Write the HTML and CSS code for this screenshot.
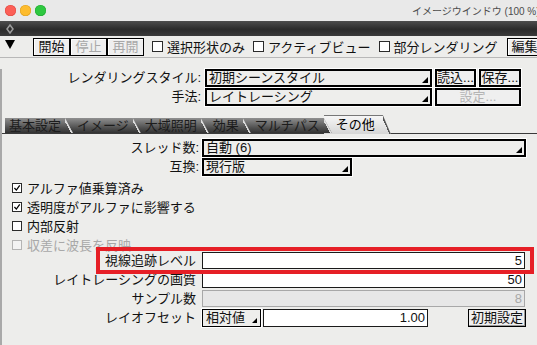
FILE: index.html
```html
<!DOCTYPE html>
<html lang="ja">
<head>
  <meta charset="UTF-8">
  <title>イメージウインドウ</title>
  <link rel="stylesheet" href="styles.css">
</head>
<body>
  <div class="window">
    <div class="titlebar">
      <span class="light red"></span><span class="light yellow"></span><span class="light green"></span>
      <span class="title">イメージウインドウ (100 %)</span>
    </div>
    <div class="darkbar">
      <svg width="8" height="10" viewBox="0 0 8 10"><polygon points="4,1 7,5 4,9 1,5" fill="none" stroke="#9c9c9c" stroke-width="1.5"/></svg>
    </div>

    <div class="toolbar">
      <svg class="disclosure" width="10" height="9" viewBox="0 0 10 9"><polygon points="0,0 10,0 5,9" fill="#000"/></svg>
      <div class="tool-btns">
        <button class="tbtn">開始</button><button class="tbtn" disabled>停止</button><button class="tbtn" disabled>再開</button>
      </div>
      <label class="check"><span class="box"></span>選択形状のみ</label>
      <label class="check"><span class="box"></span>アクティブビュー</label>
      <label class="check"><span class="box"></span>部分レンダリング</label>
      <button class="tbtn edit">編集</button>
    </div>

    <div class="content">
      <div class="style-grid">
        <span class="label">レンダリングスタイル:</span>
        <div class="select">初期シーンスタイル</div>
        <button class="btn">読込...</button>
        <button class="btn">保存...</button>
        <span class="label">手法:</span>
        <div class="select">レイトレーシング</div>
        <button class="btn wide" disabled>設定...</button>
      </div>

      <div class="tabs">
        <span class="tab">基本設定</span>
        <span class="tab">イメージ</span>
        <span class="tab">大域照明</span>
        <span class="tab">効果</span>
        <span class="tab">マルチパス</span>
        <span class="tab active">その他</span>
      </div>

      <div class="opt-grid">
        <span class="label">スレッド数:</span>
        <div class="select threads">自動 (6)</div>
        <span class="label">互換:</span>
        <div class="select compat">現行版</div>
      </div>

      <div class="checks">
        <label class="check"><span class="box"><svg viewBox="0 0 10 10"><path d="M1.8 5 L4.2 7.6 L8.4 1.8" fill="none" stroke="#000" stroke-width="1.6"/></svg></span>アルファ値乗算済み</label>
        <label class="check"><span class="box"><svg viewBox="0 0 10 10"><path d="M1.8 5 L4.2 7.6 L8.4 1.8" fill="none" stroke="#000" stroke-width="1.6"/></svg></span>透明度がアルファに影響する</label>
        <label class="check"><span class="box"></span>内部反射</label>
        <label class="check disabled"><span class="box"></span>収差に波長を反映</label>
      </div>

      <div class="fields">
        <div class="field-row highlight">
          <span class="label">視線追跡レベル</span>
          <div class="input">5</div>
        </div>
        <div class="field-row">
          <span class="label">レイトレーシングの画質</span>
          <div class="input">50</div>
        </div>
        <div class="field-row">
          <span class="label">サンプル数</span>
          <div class="input disabled">8</div>
        </div>
        <div class="field-row last">
          <span class="label">レイオフセット</span>
          <div class="offset">
            <div class="select small">相対値</div>
            <div class="input">1.00</div>
            <button class="reset">初期設定</button>
          </div>
        </div>
      </div>
    </div>
  </div>
</body>
</html>
```

FILE: styles.css
```css
* {
  box-sizing: border-box;
}
body {
  margin: 0;
  background: #ededeb;
  font-family: "Liberation Sans", "Noto Sans CJK JP", sans-serif;
  font-size: 13px;
  color: #111;
}
.window {
  width: 537px;
  height: 345px;
  overflow: hidden;
}

/* title bar */
.titlebar {
  height: 21px;
  display: flex;
  align-items: center;
  padding-left: 5px;
  background: #e9e9e9;
  white-space: nowrap;
  overflow: hidden;
}
.light {
  flex: none;
  width: 11px;
  height: 11px;
  border-radius: 50%;
  margin-right: 4px;
}
.light.red { background: #fc5f57; box-shadow: inset 0 0 0 0.5px #de463f; }
.light.yellow { background: #fdbc2e; box-shadow: inset 0 0 0 0.5px #dc9d1d; }
.light.green { background: #2ec840; box-shadow: inset 0 0 0 0.5px #1ea72e; }
.title {
  margin-left: 362px;
  font-size: 10px;
  color: #4c4c4c;
}
.darkbar {
  height: 15px;
  display: flex;
  align-items: center;
  padding-left: 6px;
  background: linear-gradient(#4d4d4d, #2b2b2b 55%, #3b3b3b);
}

/* toolbar */
.toolbar {
  height: 22px;
  display: flex;
  align-items: center;
  padding-left: 5px;
  border-bottom: 1px solid #b8b8b8;
  white-space: nowrap;
}
.disclosure {
  flex: none;
  margin-bottom: 4px;
}
.tool-btns {
  display: flex;
  margin-left: 18px;
}
.tbtn {
  flex: none;
  width: 37px;
  height: 18px;
  padding: 0;
  border: 1px solid #000;
  background: #efefef;
  box-shadow: inset 1px 1px 0 #fff;
  font: inherit;
  line-height: 16px;
  color: #111;
}
.tbtn:disabled {
  color: #a8a8a8;
}
.tbtn.edit {
  margin-left: 9px;
  width: 40px;
  text-align: left;
  padding-left: 4px;
}
.check {
  display: flex;
  align-items: center;
  gap: 4px;
}
.toolbar .check {
  margin-left: 8px;
}
.box {
  flex: none;
  display: flex;
  width: 11px;
  height: 11px;
  background: #fff;
  border: 1px solid #2a2a2a;
}
.box svg {
  width: 100%;
  height: 100%;
}

/* rendering style rows */
.content {
  height: 287px;
  border-left: 2px solid #a9a9a9;
}
.style-grid {
  display: grid;
  grid-template-columns: 200px 227px 41px 42px;
  grid-auto-rows: 18px;
  column-gap: 3px;
  row-gap: 1px;
  margin-top: 11px;
}
.label {
  text-align: right;
  padding-right: 1px;
  line-height: 18px;
  white-space: nowrap;
}
.select {
  position: relative;
  border: 2px solid #000;
  background: #eeeeec;
  box-shadow: 0 0 0 1px #fff;
  padding-left: 2px;
  line-height: 14px;
  white-space: nowrap;
}
.select::after {
  content: "";
  position: absolute;
  right: 2px;
  bottom: 2px;
  width: 6px;
  height: 6px;
  background: #000;
  clip-path: polygon(100% 0, 100% 100%, 0 100%);
}
.btn {
  padding: 0;
  border: 2px solid #000;
  background: #efefef;
  box-shadow: 0 0 0 1px #fff;
  font: inherit;
  line-height: 14px;
  color: #111;
}
.btn.wide {
  grid-column: 3 / span 2;
}
.btn:disabled {
  color: #b4b4b4;
}

/* tabs */
.tabs {
  display: flex;
  align-items: flex-end;
  height: 19px;
  margin-top: 9px;
  padding-left: 3px;
  border-bottom: 1px solid #3a3a3a;
}
.tab {
  position: relative;
  height: 15px;
  line-height: 15px;
  padding: 0 12px;
  margin-left: -8px;
  background: linear-gradient(#909090, #505050 65%, #333);
  color: #1c1c1c;
  white-space: nowrap;
  clip-path: polygon(0 0, calc(100% - 8px) 0, 100% 100%, 0 100%);
}
.tab::after {
  content: "";
  position: absolute;
  top: 0;
  right: 0;
  width: 8px;
  height: 100%;
  background: linear-gradient(to top right, transparent 38%, #dedede 38%, #dedede 52%, transparent 52%);
}
.tab:first-child {
  margin-left: 0;
  padding-left: 4px;
}
.tab:nth-child(1) { z-index: 6; }
.tab:nth-child(2) { z-index: 5; }
.tab:nth-child(3) { z-index: 4; }
.tab:nth-child(4) { z-index: 3; }
.tab:nth-child(5) { z-index: 2; }
.tab.active {
  z-index: 1;
  height: 19px;
  line-height: 17px;
  margin-bottom: -1px;
  padding-right: 16px;
  border-top: 1px solid #777;
  background: linear-gradient(#f6f6f6, #d6d6d6);
  color: #000;
}
.tab.active::after {
  background: linear-gradient(to top right, transparent 40%, #555 40%, #555 54%, transparent 54%);
}

/* other settings panel */
.opt-grid {
  display: grid;
  grid-template-columns: 198px auto;
  justify-content: start;
  grid-auto-rows: 18px;
  column-gap: 2px;
  row-gap: 1px;
  margin-top: 5px;
}
.select.threads { width: 324px; }
.select.compat { width: 150px; }

.checks {
  margin-top: 2px;
  padding-left: 10px;
}
.checks .check {
  height: 19px;
  gap: 5px;
}
.checks .box {
  width: 10px;
  height: 10px;
}
.check.disabled {
  color: #a8a8a8;
}
.check.disabled .box {
  border-color: #b4b4b4;
  background: #f3f3f3;
}

.fields {
  display: flex;
  flex-direction: column;
  gap: 2px;
  margin-top: -2px;
}
.field-row {
  display: flex;
  gap: 6px;
  height: 17px;
}
.field-row.last {
  height: 18px;
}
.field-row .label {
  width: 194px;
  padding-right: 0;
  line-height: 17px;
}
.input {
  width: 323px;
  background: #fff;
  border: 1px solid #1a1a1a;
  text-align: right;
  padding-right: 2px;
  line-height: 15px;
}
.input.disabled {
  background: #e7e7e7;
  border-color: #a8a8a8;
  color: #a8a8a8;
}
.offset {
  display: flex;
  width: 324px;
}
.select.small {
  width: 59px;
  border-width: 1px;
  line-height: 16px;
  padding-left: 3px;
}
.select.small::after {
  right: 3px;
  bottom: 3px;
  width: 5px;
  height: 5px;
}
.offset .input {
  width: 165px;
  margin-left: 2px;
  line-height: 16px;
}
.reset {
  margin-left: auto;
  width: 58px;
  padding: 0;
  border: 1px solid #000;
  background: #efefef;
  box-shadow: inset -1px -1px 0 #999;
  font: inherit;
  line-height: 16px;
  color: #111;
}

/* annotation box */
.field-row.highlight {
  position: relative;
}
.field-row.highlight::before {
  content: "";
  position: absolute;
  left: 94px;
  top: -5px;
  right: 3px;
  bottom: -5px;
  border: 4px solid #e61f26;
  z-index: 2;
  pointer-events: none;
}
```
